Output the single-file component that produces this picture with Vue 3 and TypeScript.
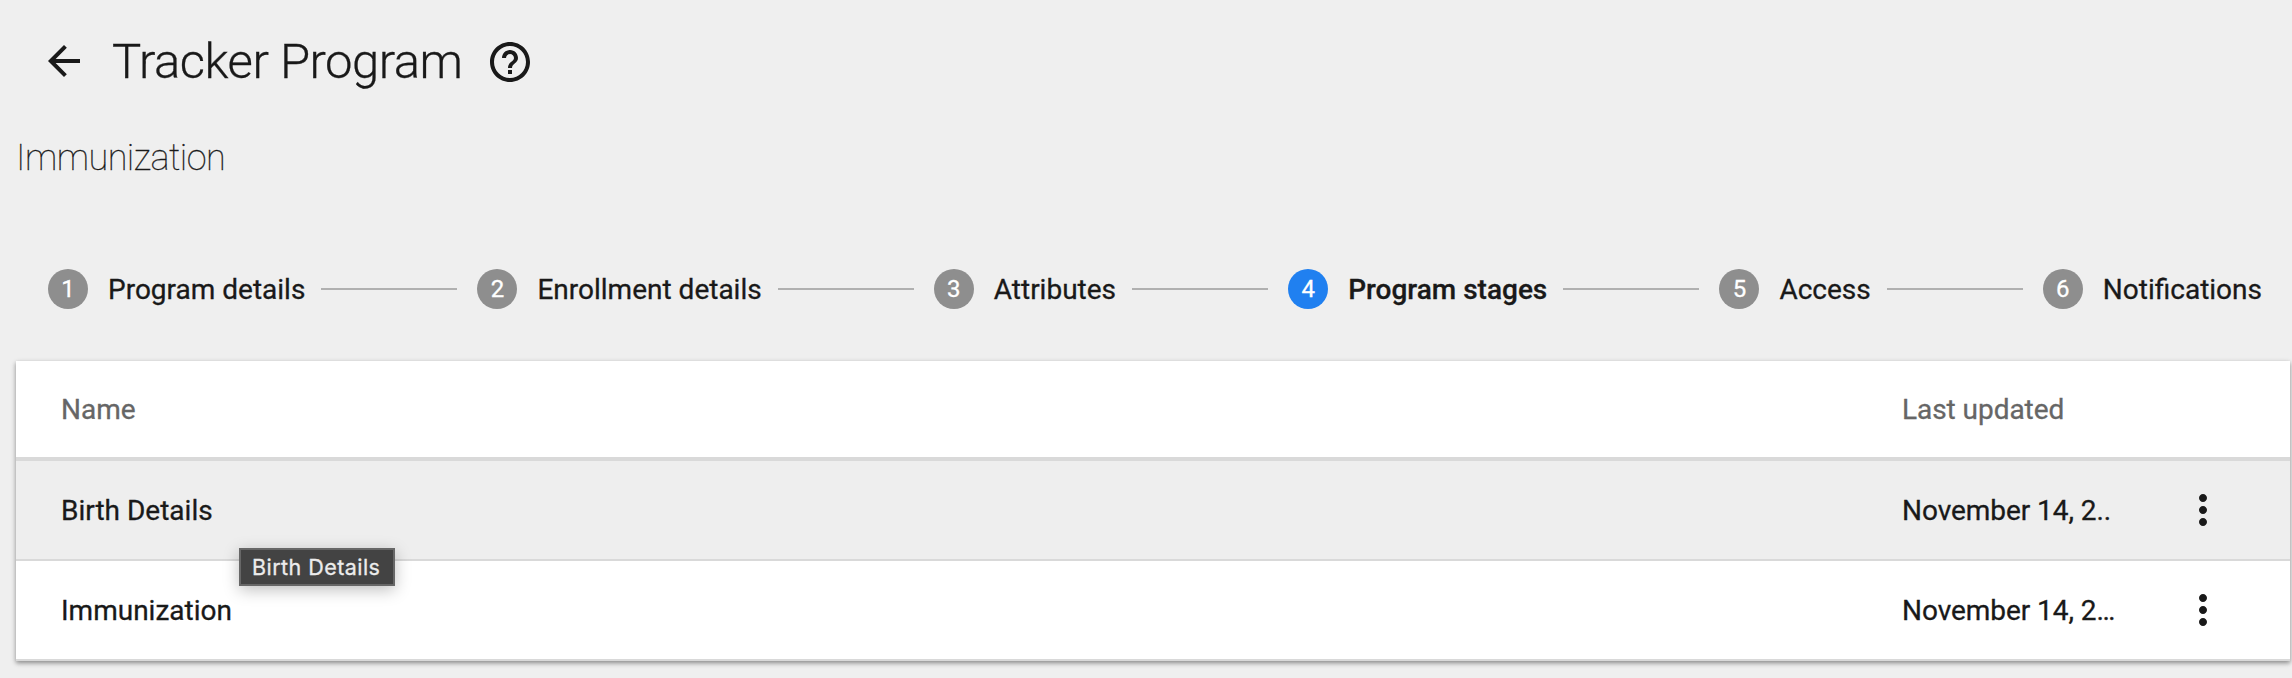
<script setup lang="ts">
interface StageRow {
  name: string
  updated: string
  hovered: boolean
}

const steps: string[] = [
  'Program details',
  'Enrollment details',
  'Attributes',
  'Program stages',
  'Access',
  'Notifications',
]
const activeStep = 3

const rows: StageRow[] = [
  { name: 'Birth Details', updated: 'November 14, 2..', hovered: true },
  { name: 'Immunization', updated: 'November 14, 2…', hovered: false },
]
</script>

<template>
  <main class="page">
    <header class="heading">
      <svg class="icon back" viewBox="0 0 24 24">
        <path d="M20 11H7.83l5.59-5.59L12 4l-8 8 8 8 1.41-1.41L7.83 13H20v-2z" />
      </svg>
      <h1 class="title">Tracker Program</h1>
      <svg class="icon help" viewBox="0 0 24 24">
        <path
          d="M11 18h2v-2h-2v2zm1-16C6.48 2 2 6.48 2 12s4.48 10 10 10 10-4.48 10-10S17.52 2 12 2zm0 18c-4.41 0-8-3.59-8-8s3.59-8 8-8 8 3.59 8 8-3.59 8-8 8zm0-14c-2.21 0-4 1.79-4 4h2c0-1.1.9-2 2-2s2 .9 2 2c0 2-3 1.75-3 5h2c0-2.25 3-2.5 3-5 0-2.21-1.79-4-4-4z"
        />
      </svg>
    </header>
    <h2 class="subtitle">Immunization</h2>

    <nav class="stepper">
      <template v-for="(step, i) in steps" :key="step">
        <span v-if="i > 0" class="connector"></span>
        <span class="step" :class="{ active: i === activeStep }">
          <span class="badge">{{ i + 1 }}</span>
          <span class="label">{{ step }}</span>
        </span>
      </template>
    </nav>

    <section class="table">
      <div class="row head">
        <span class="name">Name</span>
        <span class="date">Last updated</span>
      </div>
      <div v-for="row in rows" :key="row.name" class="row" :class="{ hovered: row.hovered }">
        <span class="name">{{ row.name }}</span>
        <span class="date">{{ row.updated }}</span>
        <svg class="icon more" viewBox="0 0 24 24">
          <path
            d="M12 8c1.1 0 2-.9 2-2s-.9-2-2-2-2 .9-2 2 .9 2 2 2zm0 2c-1.1 0-2 .9-2 2s.9 2 2 2 2-.9 2-2-.9-2-2-2zm0 6c-1.1 0-2 .9-2 2s.9 2 2 2 2-.9 2-2-.9-2-2-2z"
          />
        </svg>
      </div>
      <div class="tooltip">Birth Details</div>
    </section>
  </main>
</template>

<style>
body {
  background: #efefef;
}
</style>

<style scoped>
.page {
  box-sizing: border-box;
  height: 678px;
  overflow: hidden;
  background: #efefef;
  color: #191919;
  font-family: Roboto, sans-serif;
  font-size: 28px;
  -webkit-text-stroke: 0.3px currentColor;
}
.icon {
  display: block;
  flex: none;
  width: 48px;
  height: 48px;
  fill: #191919;
}
.heading {
  display: flex;
  align-items: center;
  height: 62px;
  padding: 31px 0 0 40px;
}
.back {
  margin-top: -2px;
}
.title {
  margin: 0 0 0 24px;
  width: 351px;
  font-size: 49px;
  font-weight: 300;
  letter-spacing: -0.5px;
  line-height: 62px;
  white-space: nowrap;
}
.help {
  margin-left: 23px;
}
.subtitle {
  margin: 0;
  padding: 43px 0 0 16px;
  font-size: 36px;
  font-weight: 100;
  letter-spacing: -0.5px;
  line-height: 44px;
}
.stepper {
  display: flex;
  align-items: center;
  height: 48px;
  margin: 85px 30px 0 44px;
}
.step {
  display: flex;
  align-items: center;
  white-space: nowrap;
}
.badge {
  flex: none;
  width: 40px;
  height: 40px;
  margin: 0 20px 0 4px;
  border-radius: 50%;
  background: #8e8e8e;
  color: #fff;
  font-size: 24px;
  line-height: 40px;
  text-align: center;
}
.active .badge {
  background: #2080f0;
}
.active .label {
  font-weight: 500;
}
.connector {
  flex: 1 1 0;
  height: 2px;
  margin: 0 16px;
  background: #b0b0b0;
}
.table {
  position: relative;
  width: 2274px;
  margin: 48px 0 0 16px;
  background: #fff;
  box-shadow: 0 2px 4px rgba(0, 0, 0, 0.3), 0 2px 6px rgba(0, 0, 0, 0.16);
}
.row {
  box-sizing: border-box;
  display: flex;
  align-items: center;
  height: 100px;
  padding-left: 45px;
  border-bottom: 2px solid #d9d9d9;
}
.head {
  border-bottom-width: 4px;
  color: #666;
}
.hovered {
  background: #eee;
}
.name {
  width: 1841px;
}
.date {
  width: 277px;
  letter-spacing: -0.05px;
}
.tooltip {
  position: absolute;
  left: 223px;
  top: 187px;
  box-sizing: border-box;
  width: 156px;
  height: 38px;
  padding-left: 11px;
  border: 2px solid #676767;
  background: #434343;
  box-shadow: 0 4px 16px rgba(0, 0, 0, 0.25);
  color: #ececec;
  font-family: Inter, sans-serif;
  font-size: 21.5px;
  letter-spacing: 0.45px;
  line-height: 34px;
  white-space: nowrap;
}
</style>
